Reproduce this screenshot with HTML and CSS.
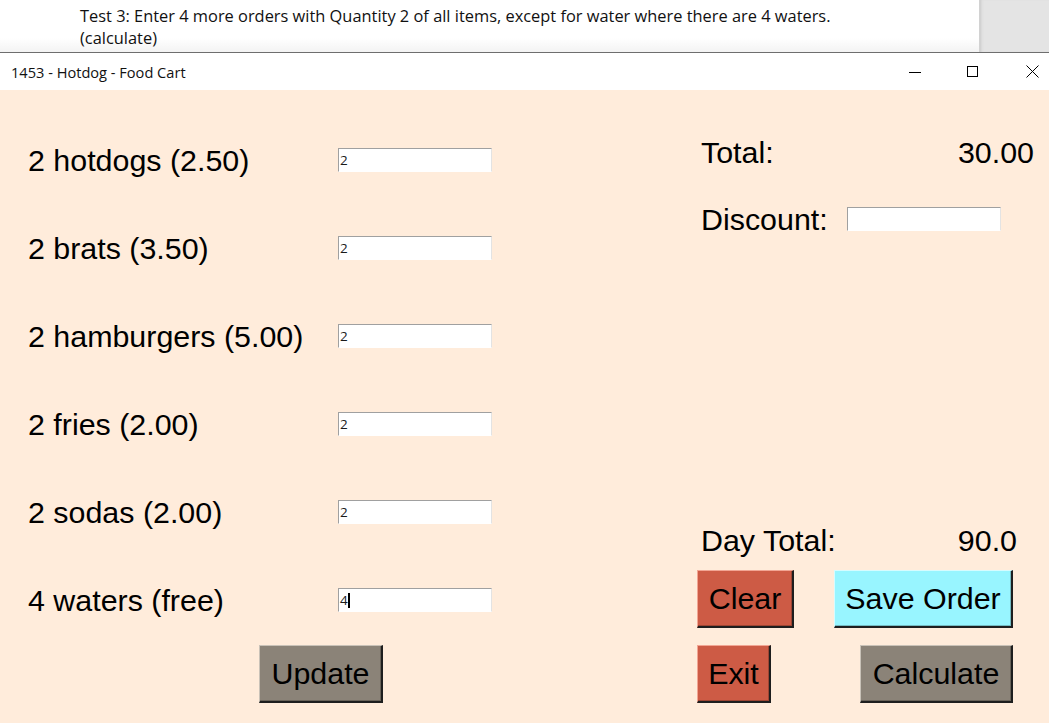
FILE: index.html
```html
<!DOCTYPE html>
<html lang="en">
<head>
<meta charset="utf-8">
<title>1453 - Hotdog - Food Cart</title>
<link rel="stylesheet" href="styles.css">
</head>
<body>
<div class="screen">
  <div class="doc">
    <div class="doc-page">
      <p class="doc-text">Test 3: Enter 4 more orders with Quantity 2 of all items, except for water where there are 4 waters.<br>(calculate)</p>
    </div>
    <div class="doc-scroll"></div>
  </div>
  <div class="window">
    <div class="titlebar">
      <span class="title">1453 - Hotdog - Food Cart</span>
      <div class="controls">
        <svg class="ctl ctl-min" width="12" height="12" viewBox="0 0 12 12"><path d="M0 6.5H12" stroke="#000" stroke-width="1" fill="none"/></svg>
        <svg class="ctl ctl-max" width="12" height="12" viewBox="0 0 12 12"><rect x="0.5" y="0.5" width="10" height="10" stroke="#000" stroke-width="1" fill="none"/></svg>
        <svg class="ctl ctl-close" width="13" height="13" viewBox="0 0 13 13"><path d="M0.5 0.5L12.5 12.5M12.5 0.5L0.5 12.5" stroke="#000" stroke-width="1" fill="none"/></svg>
      </div>
    </div>
    <div class="app">
      <div class="order">
        <div class="item"><span class="label">2 hotdogs (2.50)</span><div class="entry">2</div></div>
        <div class="item"><span class="label">2 brats (3.50)</span><div class="entry">2</div></div>
        <div class="item"><span class="label">2 hamburgers (5.00)</span><div class="entry">2</div></div>
        <div class="item"><span class="label">2 fries (2.00)</span><div class="entry">2</div></div>
        <div class="item"><span class="label">2 sodas (2.00)</span><div class="entry">2</div></div>
        <div class="item"><span class="label">4 waters (free)</span><div class="entry">4<span class="caret"></span></div></div>
        <button class="btn btn-grey btn-update">Update</button>
      </div>
      <div class="summary">
        <div class="total-row"><span>Total:</span><span>30.00</span></div>
        <div class="discount-row"><span class="discount-label">Discount:</span><div class="entry"></div></div>
        <div class="spacer"></div>
        <div class="day-row"><span>Day Total:</span><span>90.0</span></div>
        <div class="btn-row btn-row-1">
          <button class="btn btn-red btn-clear">Clear</button>
          <button class="btn btn-cyan btn-save">Save Order</button>
        </div>
        <div class="btn-row btn-row-2">
          <button class="btn btn-red btn-exit">Exit</button>
          <button class="btn btn-grey btn-calc">Calculate</button>
        </div>
      </div>
    </div>
  </div>
</div>
</body>
</html>
```

FILE: styles.css
```css
* { box-sizing: border-box; }
html, body { margin: 0; padding: 0; }
body {
  width: 1049px;
  height: 723px;
  overflow: hidden;
  background: #ffecdb;
  font-family: "Liberation Sans", Arial, sans-serif;
}
.screen { display: flex; flex-direction: column; height: 723px; }

/* document behind the window */
.doc {
  display: flex;
  height: 53px;
  border-bottom: 1px solid #6e6e6e;
}
.doc-page {
  flex: 1;
  background: linear-gradient(#ffffff 0, #ffffff 38px, #f3f3f3 52px);
  padding: 5px 0 0 80px;
}
.doc-text {
  margin: 0;
  font-family: "Open Sans", "Noto Sans", sans-serif;
  font-size: 16.4px;
  line-height: 22px;
  color: #111;
}
.doc-scroll {
  width: 70px;
  background: #e4e4e4;
  border-left: 1px solid #d2d2d2;
  box-shadow: inset 3px 0 3px -2px #c8c8c8;
}

/* window */
.window { flex: 1; display: flex; flex-direction: column; }
.titlebar {
  height: 37px;
  background: #ffffff;
  display: flex;
  align-items: center;
  padding-left: 11px;
}
.title {
  font-family: "Open Sans", "Noto Sans", sans-serif;
  font-size: 14.6px;
  color: #111;
  flex: 1;
}
.controls { display: flex; align-items: center; padding-right: 10px; }
.ctl { display: block; }
.ctl-min { margin-right: 46px; }
.ctl-max { margin-right: 47px; }

.app {
  flex: 1;
  display: flex;
  background: #ffecdb;
  color: #000;
}

/* left: order items */
.order {
  width: 697px;
  padding: 26px 0 0 28px;
  display: flex;
  flex-direction: column;
  align-items: flex-start;
}
.item {
  height: 88px;
  display: flex;
  align-items: center;
}
.label {
  width: 310px;
  font-size: 30.4px;
  line-height: 34px;
}
.entry {
  width: 154px;
  height: 24px;
  background: #fff;
  border-style: solid;
  border-width: 1px;
  border-color: #a0a0a0 #e3e3e3 #ffffff #a0a0a0;
  font-family: "Open Sans", "Noto Sans", sans-serif;
  font-size: 13.5px;
  line-height: 21px;
  color: #1a1a1a;
  padding-left: 1px;
  display: flex;
  align-items: center;
}
.caret {
  display: inline-block;
  width: 2px;
  height: 15px;
  background: #000;
}

/* buttons */
.btn {
  height: 58px;
  padding: 0;
  font-family: "Liberation Sans", Arial, sans-serif;
  font-size: 30.4px;
  color: #000;
  border-style: solid;
  border-width: 1px 2px 2px 1px;
  cursor: pointer;
}
.btn-grey {
  background: #8b8378;
  border-color: #c9c2b8 #1e1e1e #1e1e1e #c9c2b8;
  box-shadow: inset -1px -1px 0 #6a645b;
}
.btn-red {
  background: #cd5b45;
  border-color: #f2a593 #1e1e1e #1e1e1e #f2a593;
  box-shadow: inset -1px -1px 0 #9c4533;
}
.btn-cyan {
  background: #98f5ff;
  border-color: #d6fcff #1e1e1e #1e1e1e #d6fcff;
  box-shadow: inset -1px -1px 0 #73bac2;
}
.btn-update { width: 124px; margin: 1px 0 0 231px; }

/* right: summary */
.summary {
  flex: 1;
  display: flex;
  flex-direction: column;
  padding: 45px 0 20px 0;
  font-size: 30.4px;
  line-height: 34px;
}
.total-row {
  height: 34px;
  display: flex;
  justify-content: space-between;
  padding: 0 15px 0 4px;
}
.discount-row {
  height: 34px;
  margin-top: 33px;
  display: flex;
  align-items: center;
  padding-left: 4px;
}
.discount-label { width: 146px; }
.spacer { flex: 1; }
.day-row {
  height: 34px;
  display: flex;
  justify-content: space-between;
  padding: 0 32px 0 4px;
}
.btn-row { display: flex; }
.btn-row-1 { margin-top: 13px; }
.btn-row-2 { margin-top: 17px; }
.btn-clear { width: 97px; }
.btn-save { width: 179px; margin-left: 40px; }
.btn-exit { width: 74px; }
.btn-calc { width: 153px; margin-left: 89px; }
```
